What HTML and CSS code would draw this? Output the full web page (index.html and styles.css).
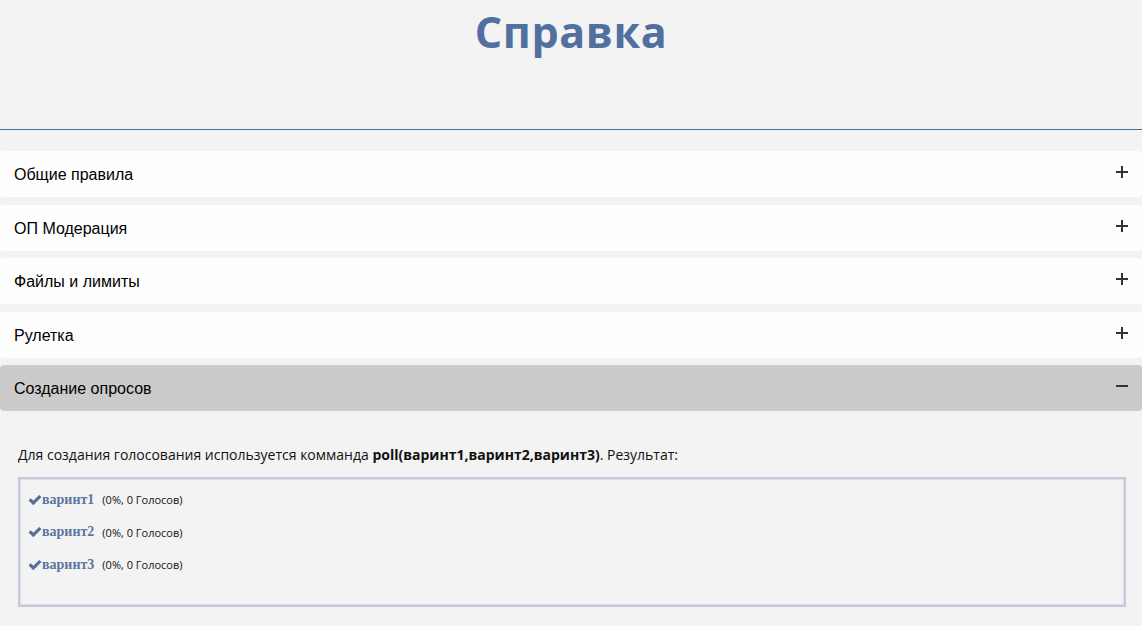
FILE: index.html
```html
<!DOCTYPE html>
<html lang="ru">
<head>
<meta charset="utf-8">
<title>Справка</title>
<link rel="stylesheet" href="styles.css">
</head>
<body>
<header class="page-head">
  <h1 class="title">Справка</h1>
</header>
<main class="accordion">
  <div class="acc-item"><span class="acc-label">Общие правила</span><svg class="acc-sign" viewBox="0 0 12 12" width="12" height="12"><path d="M0 6 H12 M6 0 V12" stroke="#333" stroke-width="2"/></svg></div>
  <div class="acc-item"><span class="acc-label">ОП Модерация</span><svg class="acc-sign" viewBox="0 0 12 12" width="12" height="12"><path d="M0 6 H12 M6 0 V12" stroke="#333" stroke-width="2"/></svg></div>
  <div class="acc-item"><span class="acc-label">Файлы и лимиты</span><svg class="acc-sign" viewBox="0 0 12 12" width="12" height="12"><path d="M0 6 H12 M6 0 V12" stroke="#333" stroke-width="2"/></svg></div>
  <div class="acc-item"><span class="acc-label">Рулетка</span><svg class="acc-sign" viewBox="0 0 12 12" width="12" height="12"><path d="M0 6 H12 M6 0 V12" stroke="#333" stroke-width="2"/></svg></div>
  <div class="acc-item active"><span class="acc-label">Создание опросов</span><svg class="acc-sign" viewBox="0 0 12 12" width="12" height="12"><path d="M0 6 H12" stroke="#333" stroke-width="2"/></svg></div>
  <section class="acc-body">
    <p class="desc">Для создания голосования используется комманда <b>poll(варинт1,варинт2,варинт3)</b>. Результат:</p>
    <div class="poll">
      <div class="opt"><svg class="check" viewBox="0 0 14 12" width="14" height="12"><path d="M0.5 6.5 L2.8 4.3 L5.3 6.8 L11.2 0.9 L13.5 3.1 L5.3 11.2 Z" fill="#52709f"/></svg><span class="opt-name">варинт1</span><span class="opt-stat">(0%, 0 Голосов)</span></div>
      <div class="opt"><svg class="check" viewBox="0 0 14 12" width="14" height="12"><path d="M0.5 6.5 L2.8 4.3 L5.3 6.8 L11.2 0.9 L13.5 3.1 L5.3 11.2 Z" fill="#52709f"/></svg><span class="opt-name">варинт2</span><span class="opt-stat">(0%, 0 Голосов)</span></div>
      <div class="opt"><svg class="check" viewBox="0 0 14 12" width="14" height="12"><path d="M0.5 6.5 L2.8 4.3 L5.3 6.8 L11.2 0.9 L13.5 3.1 L5.3 11.2 Z" fill="#52709f"/></svg><span class="opt-name">варинт3</span><span class="opt-stat">(0%, 0 Голосов)</span></div>
    </div>
  </section>
</main>
</body>
</html>
```
FILE: styles.css
```css
html, body {
  margin: 0;
  padding: 0;
  background: #f3f3f3;
}
body {
  font-family: "Liberation Sans", Arial, sans-serif;
  color: #000;
}
.page-head {
  height: 129px;
  border-bottom: 1px solid #4a6ca6;
  text-align: center;
}
.title {
  margin: 0;
  padding-top: 3px;
  font-family: "Open Sans", sans-serif;
  font-weight: 700;
  font-size: 43px;
  line-height: 58px;
  color: #52709f;
  letter-spacing: 0.6px;
}
.accordion {
  padding-top: 21px;
}
.acc-item {
  height: 46px;
  margin-bottom: 7.5px;
  background: #fefefe;
  border-radius: 4px;
  display: flex;
  align-items: center;
  justify-content: space-between;
  padding: 0 14px;
  font-size: 16px;
}
.acc-item.active {
  background: #cbcbcb;
}
.acc-label {
  padding-top: 2px;
}
.acc-sign {
  display: block;
  margin-top: -4px;
  margin-right: 0;
}
.acc-body {
  padding: 26px 16px 20px 18px;
}
.desc {
  margin: 0 0 12px 0;
  font-family: "Open Sans", sans-serif;
  font-size: 14px;
  line-height: 20px;
  color: #111;
}
.desc b {
  font-weight: 700;
}
.poll {
  border: 2px solid #c6cad6;
  box-shadow: inset 0 0 0 1px #dcdfe6;
  height: 130px;
  box-sizing: border-box;
  padding: 5px 8px;
}
.opt {
  display: flex;
  align-items: center;
  height: 32.5px;
}
.check {
  margin-right: 0;
}
.opt-name {
  font-family: "Liberation Serif", "Times New Roman", serif;
  font-weight: 700;
  font-size: 14px;
  color: #5a75a2;
  margin-right: 8px;
}
.opt-stat {
  font-family: "Open Sans", sans-serif;
  font-size: 11px;
  color: #111;
}
```
